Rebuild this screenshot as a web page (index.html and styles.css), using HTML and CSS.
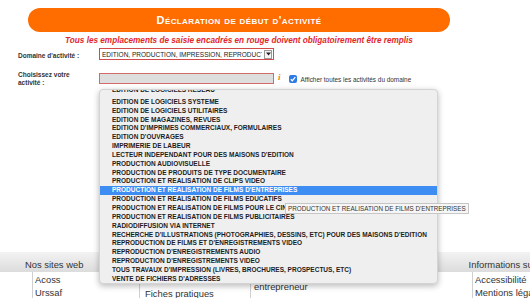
FILE: index.html
```html
<!DOCTYPE html>
<html lang="fr">
<head>
  <meta charset="UTF-8">
  <meta name="viewport" content="width=device-width, initial-scale=1.0">
  <title>Déclaration de début d'activité</title>
  <link rel="stylesheet" href="styles.css">
</head>
<body>
  <div class="page">
    <div class="banner">Déclaration de début d'activité</div>
    <p class="notice">Tous les emplacements de saisie encadrés en rouge doivent obligatoirement être remplis</p>

    <div class="form">
      <div class="row">
        <label class="lbl">Domaine d'activité :</label>
        <div class="select">
          <span class="select-text">EDITION, PRODUCTION, IMPRESSION, REPRODUCTION</span>
          <span class="select-arrow"><svg width="5" height="4" viewBox="0 0 5 4"><path d="M0 0.5h5L2.5 3.5z" fill="#222"/></svg></span>
        </div>
      </div>

      <div class="row row-activity">
        <label class="lbl">Choisissez votre<br>activité :</label>
        <div class="field"></div>
        <span class="info">i</span>
        <span class="check"><svg width="8" height="8" viewBox="0 0 8 8"><path d="M1.8 4.2l1.5 1.6 3-3.6" fill="none" stroke="#fff" stroke-width="1.3"/></svg></span>
        <span class="check-label">Afficher toutes les activités du domaine</span>
      </div>
    </div>

    <!-- Liste déroulante ouverte (déjà défilée) -->
    <div class="dropdown">
      <ul class="options">
        <li class="scrolled">EDITION DE LOGICIELS RESEAU</li>
        <li>EDITION DE LOGICIELS SYSTEME</li>
        <li>EDITION DE LOGICIELS UTILITAIRES</li>
        <li>EDITION DE MAGAZINES, REVUES</li>
        <li>EDITION D'IMPRIMES COMMERCIAUX, FORMULAIRES</li>
        <li>EDITION D'OUVRAGES</li>
        <li>IMPRIMERIE DE LABEUR</li>
        <li>LECTEUR INDEPENDANT POUR DES MAISONS D'EDITION</li>
        <li>PRODUCTION AUDIOVISUELLE</li>
        <li>PRODUCTION DE PRODUITS DE TYPE DOCUMENTAIRE</li>
        <li>PRODUCTION ET REALISATION DE CLIPS VIDEO</li>
        <li class="selected">PRODUCTION ET REALISATION DE FILMS D'ENTREPRISES</li>
        <li>PRODUCTION ET REALISATION DE FILMS EDUCATIFS</li>
        <li>PRODUCTION ET REALISATION DE FILMS POUR LE CINEMA</li>
        <li>PRODUCTION ET REALISATION DE FILMS PUBLICITAIRES</li>
        <li>RADIODIFFUSION VIA INTERNET</li>
        <li>RECHERCHE D'ILLUSTRATIONS (PHOTOGRAPHIES, DESSINS, ETC) POUR DES MAISONS D'EDITION</li>
        <li>REPRODUCTION DE FILMS ET D'ENREGISTREMENTS VIDEO</li>
        <li>REPRODUCTION D'ENREGISTREMENTS AUDIO</li>
        <li>REPRODUCTION D'ENREGISTREMENTS VIDEO</li>
        <li>TOUS TRAVAUX D'IMPRESSION (LIVRES, BROCHURES, PROSPECTUS, ETC)</li>
        <li>VENTE DE FICHIERS D'ADRESSES</li>
      </ul>
    </div>

    <div class="tooltip">PRODUCTION ET REALISATION DE FILMS D'ENTREPRISES</div>

    <footer class="footer">
      <div class="footer-head">
        <span class="head-first">Nos sites web</span>
        <span>Informations sur le site</span>
      </div>
      <div class="footer-cols">
        <div class="col"></div>
        <ul class="col col-sites">
          <li>Acoss</li>
          <li>Urssaf</li>
        </ul>
        <ul class="col col-help">
          <li>Fiches pratiques</li>
        </ul>
        <ul class="col col-auto">
          <li>Devenir auto-<br>entrepreneur</li>
        </ul>
        <ul class="col col-info">
          <li>Accessibilité</li>
          <li>Mentions légales</li>
        </ul>
      </div>
    </footer>
  </div>
</body>
</html>
```

FILE: styles.css
```css
/* General Styles */
body {
  margin: 0;
  font-family: "Liberation Sans", Arial, sans-serif;
  color: #333;
  background-color: #fff;
  overflow: hidden;
}

.page {
  position: relative;
  padding-top: 8px;
}

/* Header */
.banner {
  width: 422px;
  height: 24px;
  margin-left: 28px;
  border-radius: 12px;
  background-color: #ff6c00;
  color: #fff;
  font-size: 11px;
  font-weight: bold;
  font-variant: small-caps;
  letter-spacing: 0.4px;
  line-height: 24px;
  text-align: center;
}

.notice {
  width: 422px;
  margin: 3px 0 0 28px;
  color: #e3262b;
  font-size: 8.2px;
  font-style: italic;
  font-weight: bold;
  line-height: 11px;
  text-align: center;
}

/* Form */
.form {
  padding-left: 18px;
}

.row {
  display: flex;
  align-items: flex-start;
  margin-top: 2px;
}

.row-activity {
  margin-top: 10px;
}

.lbl {
  width: 81px;
  padding-top: 4px;
  font-size: 6.5px;
  font-weight: bold;
  line-height: 8.5px;
  color: #333;
}

.row-activity .lbl {
  padding-top: 0;
}

.select {
  display: flex;
  align-items: center;
  width: 173px;
  height: 10px;
  border: 1px solid #d24a4a;
  background-color: #fff;
}

.select-text {
  flex: 1;
  overflow: hidden;
  padding-left: 2px;
  font-size: 6.5px;
  white-space: nowrap;
  color: #222;
}

.select-arrow {
  display: flex;
  align-items: center;
  justify-content: center;
  width: 6px;
  height: 7px;
  margin: 0 1px 0 2px;
  border: 1px solid #999;
  background-color: #f4f4f4;
}

.field {
  width: 173px;
  height: 9px;
  margin-top: 2px;
  border: 1px solid #d46a6a;
  background-color: #dedede;
}

.info {
  margin: 2px 0 0 4px;
  color: #f07a10;
  font-family: "Liberation Serif", serif;
  font-size: 9px;
  font-style: italic;
  font-weight: bold;
  line-height: 8px;
}

.check {
  display: flex;
  width: 8px;
  height: 8px;
  margin: 4px 0 0 8px;
  border-radius: 2px;
  background-color: #2e7be6;
}

.check-label {
  margin: 5px 0 0 4px;
  font-size: 6.4px;
  line-height: 7px;
  color: #333;
}

/* Open list */
.dropdown {
  position: absolute;
  top: 89px;
  left: 99px;
  z-index: 2;
  width: 337px;
  height: 193px;
  overflow: hidden;
  border: 1px solid #d4d4d4;
  border-radius: 4px;
  background-color: #efefef;
  box-shadow: 0 2px 6px rgba(0, 0, 0, 0.28);
}

.options {
  margin: -1px 0 0;
  padding: 0;
  list-style: none;
}

.options li {
  height: 8.85px;
  padding-left: 12px;
  font-size: 6.5px;
  font-weight: bold;
  line-height: 8.85px;
  white-space: nowrap;
  color: #1d1d1d;
}

/* first row is half scrolled out of view */
.options li.scrolled {
  line-height: 1px;
}

.options li.selected {
  background-color: #3d8df2;
  color: #fff;
}

.tooltip {
  position: absolute;
  top: 203px;
  left: 285px;
  z-index: 3;
  padding: 0 2px;
  border: 1px solid #c6c6c6;
  background-color: #f6f6f6;
  font-size: 6.3px;
  line-height: 9px;
  white-space: nowrap;
  color: #333;
}

/* Footer */
.footer {
  margin-top: 164px;
  font-size: 9.4px;
  color: #333;
}

.footer-head {
  height: 13px;
  padding: 7px 0 0 25px;
  overflow: hidden;
  white-space: nowrap;
  background: linear-gradient(#f3f3f3, #dcdcdc);
  line-height: 12px;
}

.head-first {
  display: inline-block;
  width: 441px;
}

.footer-cols {
  display: grid;
  grid-template-columns: 32px 107px 111px 222px 1fr;
  height: 40px;
}

.col {
  margin: 0;
  padding: 1px 0 0 2px;
  list-style: none;
  white-space: nowrap;
  line-height: 13.5px;
}

.col + .col {
  border-left: 1px solid #cfcfcf;
}

.col-help {
  padding: 15.5px 0 0 5px;
}

.col-auto {
  padding: 1px 0 0 3px;
  line-height: 9.5px;
}
```
